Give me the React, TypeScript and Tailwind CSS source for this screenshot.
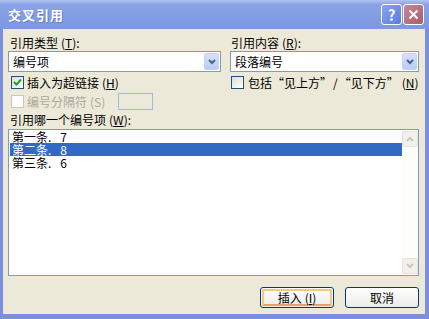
import React from 'react';

const Mn = ({ k }: { k: string }) => (
  <span className="ml-[3px]">
    (<span className="underline underline-offset-[1px]">{k}</span>)
  </span>
);

function Check({ checked, disabled }: { checked?: boolean; disabled?: boolean }) {
  return (
    <div
      className={`w-[13px] h-[13px] shrink-0 border flex items-center justify-center ${
        disabled
          ? 'border-[#cac8bb] bg-white'
          : 'border-[#1c5180] bg-[linear-gradient(135deg,#dcdcd7,#ffffff)]'
      }`}
    >
      {checked && (
        <svg width="9" height="9" viewBox="0 0 9 9">
          <path d="M1 4 L3.5 6.5 L8 1.5" stroke="#21a121" strokeWidth="2" fill="none" />
        </svg>
      )}
    </div>
  );
}

function Combo({ value }: { value: string }) {
  return (
    <div className="h-[21px] border border-[#7f9db9] bg-white flex items-center">
      <span className="flex-1 pl-[4px]">{value}</span>
      <div className="w-[15px] h-[17px] mr-[1px] rounded-[2px] bg-[linear-gradient(to_bottom,#d6e1fc,#b9ccf9)] border border-[#c3d3fd] flex items-center justify-center">
        <svg width="8" height="6" viewBox="0 0 8 6">
          <path d="M1 1 L4 4 L7 1" stroke="#4d6185" strokeWidth="2" fill="none" />
        </svg>
      </div>
    </div>
  );
}

function ScrollBtn({ up }: { up?: boolean }) {
  return (
    <div className="h-[16px] rounded-[2px] border border-[#e5e4dc] bg-[#f1f0ea] flex items-center justify-center">
      <svg width="8" height="6" viewBox="0 0 8 6">
        <path d={up ? 'M1 5 L4 2 L7 5' : 'M1 1 L4 4 L7 1'} stroke="#c9c8bd" strokeWidth="2" fill="none" />
      </svg>
    </div>
  );
}

const items = [
  { name: '第一条', no: '7' },
  { name: '第二条', no: '8' },
  { name: '第三条', no: '6' },
];

export default function App() {
  return (
    <div className="w-[429px] h-[319px] flex flex-col bg-[#7b90dc] font-['Noto_Sans_CJK_SC',sans-serif] text-black">
      {/* Title bar */}
      <div className="h-[29px] shrink-0 flex items-center justify-between pl-[8px] pr-[5px] bg-[linear-gradient(to_bottom,#b0c3f1,#8ba4e7_15%,#7e98e1_85%,#8099e1)]">
        <span className="text-white font-bold text-[13px] leading-[13px] tracking-[1px] [text-shadow:1px_1px_0_#6a80c8]">
          交叉引用
        </span>
        <div className="flex gap-[1px]">
          <div className="w-[21px] h-[21px] rounded-[3px] border border-white bg-[linear-gradient(135deg,#8aa4ef,#5b7be0)] flex items-center justify-center text-white font-bold text-[15px] leading-none">
            ?
          </div>
          <div className="w-[21px] h-[21px] rounded-[3px] border border-white bg-[linear-gradient(135deg,#c48896,#a85f71)] flex items-center justify-center">
            <svg width="11" height="11" viewBox="0 0 11 11">
              <path d="M1.5 1.5 L9.5 9.5 M9.5 1.5 L1.5 9.5" stroke="white" strokeWidth="2" />
            </svg>
          </div>
        </div>
      </div>

      {/* Client */}
      <div className="flex-1 ml-[3px] mr-[4px] mb-[5px] bg-[#ece9d8] flex flex-col text-[12px] leading-[13px] pt-[7px] pl-[5px] pr-[6px] pb-[6px]">
        <div className="flex gap-[9px]">
          <div className="w-[213px] flex flex-col">
            <div className="h-[13px] pl-[2px]">
              引用类型<Mn k="T" />:
            </div>
            <div className="mt-[2px]">
              <Combo value="编号项" />
            </div>
            <div className="mt-[4px] h-[13px] flex items-center gap-[3px] pl-[3px]">
              <Check checked />
              <span>
                插入为超链接<Mn k="H" />
              </span>
            </div>
            <div className="mt-[4px] h-[17px] flex items-center">
              <div className="w-[110px] flex items-center gap-[3px] pl-[3px] text-[#aca899]">
                <Check disabled />
                <span>
                  编号分隔符<span className="ml-[3px]">(S)</span>
                </span>
              </div>
              <div className="w-[35px] h-[17px] border border-[#a7bad4] bg-[#ece9d8]" />
            </div>
          </div>
          <div className="w-[189px] flex flex-col">
            <div className="h-[13px] pl-[1px]">
              引用内容<Mn k="R" />:
            </div>
            <div className="mt-[2px]">
              <Combo value="段落编号" />
            </div>
            <div className="mt-[4px] h-[13px] flex items-center gap-[4px] pl-[1px]">
              <Check />
              <span className="whitespace-nowrap">
                包括“见上方”<span className="mx-[1px]">/</span>“见下方”<Mn k="N" />
              </span>
            </div>
          </div>
        </div>

        <div className="mt-[3px] h-[13px] pl-[2px]">
          引用哪一个编号项<Mn k="W" />:
        </div>
        <div className="mt-[3px] h-[147px] border border-[#7f9db9] bg-white flex">
          <div className="flex-1 pl-[1px]">
            {items.map((it, i) => (
              <div
                key={it.name}
                className={`h-[13px] pl-[2px] flex items-center ${
                  i === 1 ? 'bg-[#316ac5] text-white' : ''
                }`}
              >
                <span>{it.name}.</span>
                <span className="ml-[9px]">{it.no}</span>
              </div>
            ))}
          </div>
          <div className="w-[16px] bg-[#fdfdfa] flex flex-col justify-between py-[1px]">
            <ScrollBtn up />
            <ScrollBtn />
          </div>
        </div>

        <div className="mt-[11px] flex justify-end gap-[11px]">
          <div className="w-[74px] h-[21px] rounded-[3px] border border-[#003c74] bg-[linear-gradient(to_bottom,#fff,#ecebe6)] p-[1px]">
            <div className="w-full h-full rounded-[2px] border-[2px] border-[#f9c77c] border-b-[#e5a365] flex items-center justify-center">
              插入<Mn k="I" />
            </div>
          </div>
          <div className="w-[74px] h-[21px] rounded-[3px] border border-[#003c74] bg-[linear-gradient(to_bottom,#fff,#ecebe6)] flex items-center justify-center">
            取消
          </div>
        </div>
      </div>
    </div>
  );
}
